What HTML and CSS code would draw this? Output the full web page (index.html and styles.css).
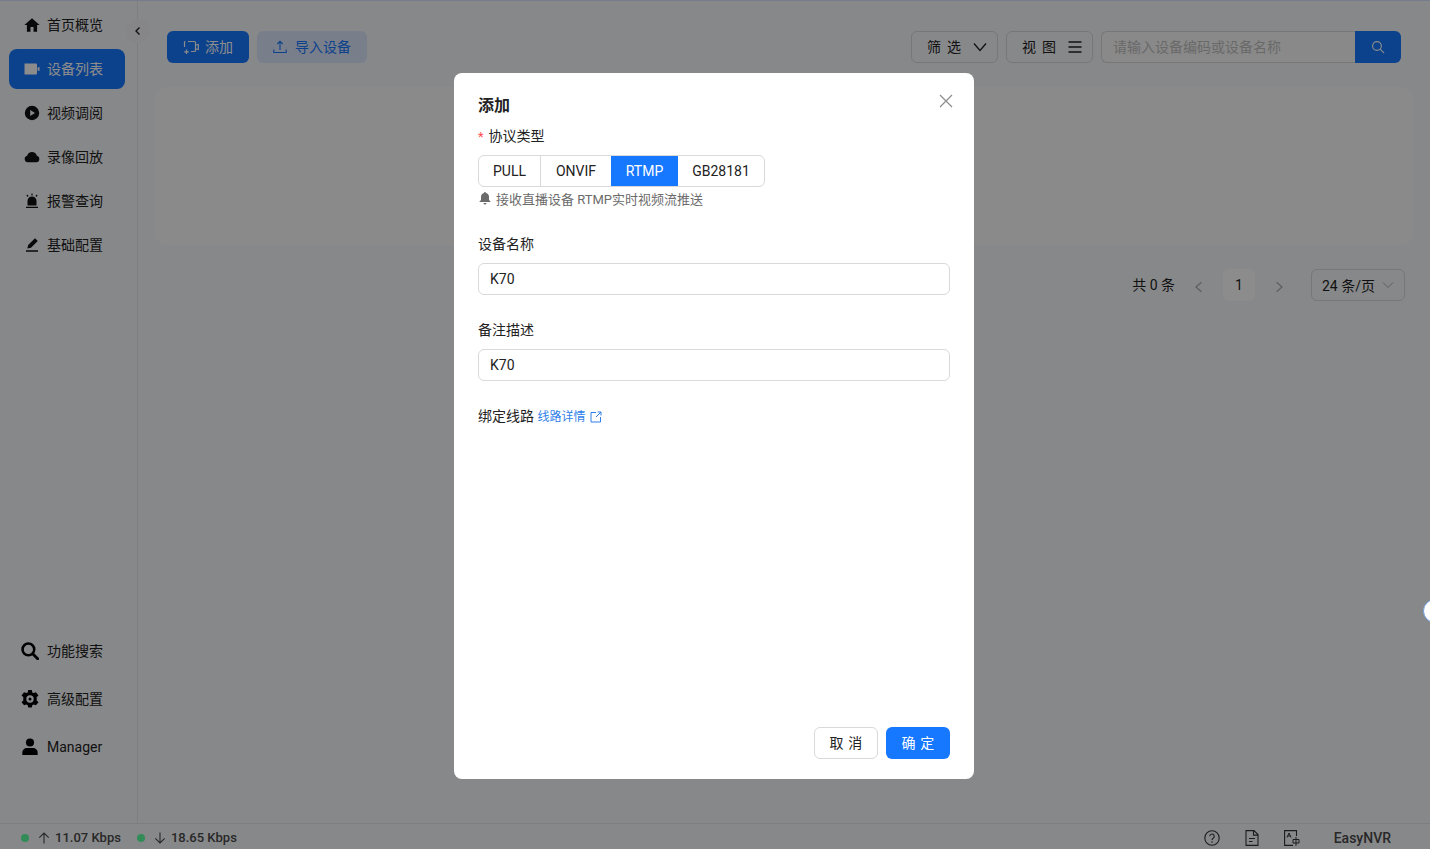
FILE: index.html
```html
<!DOCTYPE html>
<html lang="zh-CN">
<head>
<meta charset="utf-8">
<title>EasyNVR</title>
<link rel="stylesheet" href="styles.css">
</head>
<body>
<div class="app">
  <div class="body">
    <aside class="sidebar">
      <nav class="nav">
        <a class="nav-item"><svg class="nav-icon" viewBox="0 0 16 16"><path d="M8 1.200 .4 8h2.500v6.800h3.600V10h3v4.800h3.600V8h2.500z"/></svg><span>首页概览</span></a>
        <a class="nav-item active"><svg class="nav-icon" viewBox="0 0 16 16"><path d="M.5 2.500h11.500a1 1 0 0 1 1 1v9a1 1 0 0 1-1 1H.5z"/><path d="M13.600 6.500 15.500 6v4l-1.900-.5z"/></svg><span>设备列表</span></a>
        <a class="nav-item"><svg class="nav-icon" viewBox="0 0 16 16"><path fill-rule="evenodd" d="M8 .8a7.200 7.200 0 1 1 0 14.400A7.200 7.200 0 0 1 8 .8zM6.200 5v6L11 8z"/></svg><span>视频调阅</span></a>
        <a class="nav-item"><svg class="nav-icon" viewBox="0 0 16 16"><path d="M3.800 13.200a3.300 3.300 0 0 1-.6-6.500A5 5 0 0 1 12.800 6.700 3.300 3.300 0 0 1 12.300 13.200z"/></svg><span>录像回放</span></a>
        <a class="nav-item"><svg class="nav-icon" viewBox="0 0 16 16"><path d="M3.500 12.500V8a4.500 4.500 0 0 1 9 0v4.500zM2 13.700h12V15H2zM7.400 .6h1.200v2H7.400zM2.400 2.400l.9-.8 1.200 1.500-.9.800zM13.600 2.400l-.9-.8-1.200 1.500.9.800z"/></svg><span>报警查询</span></a>
        <a class="nav-item"><svg class="nav-icon" viewBox="0 0 16 16"><path d="M11 1.200l2.800 2.700-6.800 6.800-3.700.9.900-3.600zM2 13.300h12v1.400H2z"/></svg><span>基础配置</span></a>
      </nav>
      <nav class="nav-bottom">
        <a class="nav-item tall"><svg class="nav-icon big" viewBox="0 0 20 20"><circle cx="8.200" cy="8.200" r="6.500" fill="none" stroke="currentColor" stroke-width="2.800"/><path d="M13 13l5.500 5.500" stroke="currentColor" stroke-width="3.200" stroke-linecap="round"/></svg><span>功能搜索</span></a>
        <a class="nav-item tall"><svg class="nav-icon big" viewBox="1 1 18 18"><path fill-rule="evenodd" d="M8.200 1h3.600l.5 2.400 1.300.7 2.300-.8 2.600 3.100-1.800 1.600v3.600l1.800 1.600-2.600 3.100-2.300-.8-1.300.7-.5 2.400H8.200l-.5-2.400-1.300-.7-2.300.8-2.600-3.100 1.800-1.600V8L1.500 6.400l2.600-3.100 2.300.8 1.300-.7zM10 6.300a3.700 3.700 0 1 0 0 7.400 3.700 3.700 0 0 0 0-7.400zM10 8.500a1.500 1.500 0 1 1 0 3 1.500 1.500 0 0 1 0-3z"/></svg><span>高级配置</span></a>
        <a class="nav-item tall"><svg class="nav-icon big" viewBox="0 0 20 20"><circle cx="10" cy="5" r="4.500"/><path d="M1.500 19v-3c0-3 2.500-5 5-5h7c2.500 0 5 2 5 5v3z"/></svg><span>Manager</span></a>
      </nav>
      <button class="collapse" type="button"><svg viewBox="0 0 10 10" width="10" height="10"><path d="M6.500 1.500 3 5l3.500 3.500" fill="none" stroke="currentColor" stroke-width="1.400"/></svg></button>
    </aside>
    <main class="main">
      <div class="toolbar">
        <button class="btn primary" type="button"><svg class="btn-icon" viewBox="0 0 16 16"><path d="M5 2.500h6.500a1 1 0 0 1 1 1v8a1 1 0 0 1-1 1H8M1.500 8V3.500a1 1 0 0 1 1-1M13 6l2.300-.5v5L13 10M3.500 10.500v4.500M1.200 12.800h4.600" fill="none" stroke="currentColor" stroke-width="1.200"/></svg><span>添加</span></button>
        <button class="btn soft" type="button"><svg class="btn-icon" viewBox="0 0 16 16"><path d="M7 11V2.500M4.300 5 7 2.300 9.700 5M.8 10.500v3h12.400v-3" fill="none" stroke="currentColor" stroke-width="1.100"/></svg><span>导入设备</span></button>
        <div class="toolbar-right">
          <button class="btn outline" type="button"><span class="spaced-wide">筛选</span><svg class="btn-icon wide" viewBox="0 0 14 14"><path d="M1 3.500 7 10.500 13 3.500" fill="none" stroke="currentColor" stroke-width="1.300"/></svg></button>
          <button class="btn outline" type="button"><span class="spaced-wide">视图</span><svg class="btn-icon wide" viewBox="0 0 14 14"><path d="M.5 2h13M.5 7h13M.5 12h13" fill="none" stroke="currentColor" stroke-width="1.300"/></svg></button>
          <div class="search">
            <input class="search-input" type="text" placeholder="请输入设备编码或设备名称">
            <button class="search-btn" type="button"><svg viewBox="0 0 16 16" width="14" height="14"><circle cx="6.800" cy="6.800" r="5" fill="none" stroke="currentColor" stroke-width="1.300"/><path d="M10.500 10.500 15 15" stroke="currentColor" stroke-width="1.300"/></svg></button>
          </div>
        </div>
      </div>
      <section class="card"></section>
      <div class="pager">
        <span class="total">共 0 条</span>
        <svg class="pager-arrow" viewBox="0 0 10 10"><path d="M7 1 2.500 5 7 9" fill="none" stroke="currentColor" stroke-width="1"/></svg>
        <span class="page">1</span>
        <svg class="pager-arrow" viewBox="0 0 10 10"><path d="M3 1 7.500 5 3 9" fill="none" stroke="currentColor" stroke-width="1"/></svg>
        <div class="page-size"><span>24 条/页</span><svg viewBox="0 0 12 12" width="12" height="12"><path d="M1 3.500 6 8.500 11 3.500" fill="none" stroke="currentColor" stroke-width="1"/></svg></div>
      </div>
    </main>
  </div>
  <footer class="status">
    <span class="dot"></span>
    <svg class="arrow" viewBox="0 0 12 12"><path d="M6 11.500V1M1.300 5.700 6 1l4.700 4.700" fill="none" stroke="currentColor" stroke-width="1.100"/></svg>
    <span class="rate">11.07 Kbps</span>
    <span class="dot second"></span>
    <svg class="arrow" viewBox="0 0 12 12"><path d="M6 .5V11M1.300 6.300 6 11l4.700-4.700" fill="none" stroke="currentColor" stroke-width="1.100"/></svg>
    <span class="rate">18.65 Kbps</span>
    <div class="status-right">
      <svg class="status-icon" viewBox="0 0 16 16"><circle cx="8" cy="8" r="7.200" fill="none" stroke="currentColor" stroke-width="1.100"/><path d="M5.800 6.300a2.200 2.200 0 1 1 3.400 1.800C8.400 8.700 8 9 8 10" fill="none" stroke="currentColor" stroke-width="1.100"/><circle cx="8" cy="12" r=".8" fill="currentColor"/></svg>
      <svg class="status-icon" viewBox="0 0 16 16"><path d="M2 .6h8l4 4v10.800H2zM9.500 .6v4.500H14M5 8.500h6M5 11.500h3.500" fill="none" stroke="currentColor" stroke-width="1.100"/></svg>
      <svg class="status-icon" viewBox="0 0 16 16"><path d="M12.500 6V.6H.6v14.800H9" fill="none" stroke="currentColor" stroke-width="1.100"/><path d="M3 7.500 5 3l2 4.500M3.800 6h2.400M12 7v8.800M9 9.500h6v3.500H9z" fill="none" stroke="currentColor" stroke-width="1"/></svg>
      <span class="brand">EasyNVR</span>
    </div>
  </footer>
</div>

<div class="overlay">
  <div class="dialog">
    <button class="close" type="button"><svg viewBox="0 0 14 14" width="14" height="14"><path d="M1 1l12 12M13 1 1 13" fill="none" stroke="currentColor" stroke-width="1.200"/></svg></button>
    <h2 class="title">添加</h2>
    <div class="field first">
      <label class="label"><span class="req">*</span>协议类型</label>
      <div class="radios">
        <span class="radio">PULL</span>
        <span class="radio">ONVIF</span>
        <span class="radio on">RTMP</span>
        <span class="radio">GB28181</span>
      </div>
      <p class="help"><svg viewBox="0 0 14 14" width="14" height="14"><path d="M7 1a1 1 0 0 1 1 .9c2 .5 3 2 3 4v3l1.500 1.600v.5h-11v-.5L3 8.900v-3c0-2 1-3.500 3-4A1 1 0 0 1 7 1zM5.500 12h3a1.500 1.500 0 0 1-3 0z"/></svg><span>接收直播设备 RTMP实时视频流推送</span></p>
    </div>
    <div class="field">
      <label class="label">设备名称</label>
      <input class="input" type="text" value="K70">
    </div>
    <div class="field">
      <label class="label">备注描述</label>
      <input class="input" type="text" value="K70">
    </div>
    <div class="field">
      <label class="label">绑定线路 <a class="link">线路详情<svg viewBox="0 0 12 12" width="12" height="12"><path d="M6 1.500H1v9.500h9.500V6M7.500 1H11v3.500M11 1 6 6" fill="none" stroke="currentColor" stroke-width="1"/></svg></a></label>
    </div>
    <div class="dialog-footer">
      <button class="btn outline-light" type="button"><span class="spaced">取消</span></button>
      <button class="btn primary" type="button"><span class="spaced">确定</span></button>
    </div>
  </div>
</div>
<div class="float-handle"></div>
</body>
</html>
```
FILE: styles.css
```css
* { box-sizing: border-box; }
html, body { height: 100%; margin: 0; }
body {
  font-family: Roboto, "Noto Sans CJK SC", sans-serif;
  font-size: 14px;
  color: #1f1f1f;
  background: #f6f8fb;
  overflow: hidden;
}
button { font: inherit; cursor: pointer; }
h2, p { margin: 0; }

.app { display: flex; flex-direction: column; height: 849px; border-top: 1px solid #d6e2ff; }
.body { display: flex; flex: 1; min-height: 0; }

.sidebar {
  position: relative;
  width: 138px;
  flex: none;
  display: flex;
  flex-direction: column;
  justify-content: space-between;
  border-right: 1px solid #e6e6e6;
  padding: 4px 12px 56px 9px;
}
.nav { display: flex; flex-direction: column; gap: 4px; }
.nav-bottom { display: flex; flex-direction: column; gap: 8px; }
.nav-item {
  display: flex;
  align-items: center;
  height: 40px;
  width: 116px;
  padding-left: 15px;
  border-radius: 8px;
  color: #222;
  line-height: 20px;
}
.nav-item.active { background: #1677ff; color: #fff; }
.nav-item.tall { padding-left: 12px; }
.nav-icon { width: 16px; height: 16px; margin-right: 7px; fill: currentColor; color: #111; flex: none; }
.active .nav-icon { color: #fff; }
.nav-icon.big { width: 18px; height: 18px; margin-right: 8px; color: #000; }
.collapse {
  position: absolute;
  right: -13px;
  top: 18px;
  width: 24px;
  height: 24px;
  border: 0;
  border-radius: 50%;
  background: #f4f5f7;
  color: #222;
  display: flex;
  align-items: center;
  justify-content: center;
  padding: 0;
}

.main { flex: 1; min-width: 0; padding: 30px 17px 0 17px; display: flex; flex-direction: column; }
.toolbar { display: flex; align-items: center; gap: 8px; padding: 0 12px 0 12px; }
.toolbar-right { margin-left: auto; display: flex; gap: 8px; }
.btn {
  height: 32px;
  border-radius: 6px;
  border: 1px solid transparent;
  padding: 0 15px;
  display: inline-flex;
  align-items: center;
  justify-content: center;
  line-height: 20px;
  white-space: nowrap;
}
.btn.primary { background: #1677ff; color: #fff; }
.btn.soft { background: #dbe8fb; color: #1677ff; }
.btn.outline { background: transparent; border-color: #d9d9d9; color: #222; padding: 0 10px 0 15px; }
.btn.outline-light { background: #fff; border-color: #d9d9d9; color: #222; }
.btn-icon { width: 16px; height: 16px; margin-right: 6px; flex: none; }
.btn-icon.wide { width: 14px; height: 14px; margin: 0 0 0 12px; }
.spaced { letter-spacing: .34em; margin-right: -.34em; }
.spaced-wide { letter-spacing: 6px; margin-right: -6px; }

.search { display: flex; width: 300px; height: 32px; }
.search-input {
  flex: 1;
  min-width: 0;
  border: 1px solid #d9d9d9;
  border-right: 0;
  border-radius: 6px 0 0 6px;
  background: #fafafa;
  padding: 0 11px;
  font: inherit;
  outline: 0;
}
.search-input::placeholder { color: #bfbfbf; }
.search-btn {
  width: 46px;
  border: 0;
  border-radius: 0 6px 6px 0;
  background: #1677ff;
  color: #fff;
  display: flex;
  align-items: center;
  justify-content: center;
  padding: 0;
}

.card { height: 158px; margin-top: 24px; border-radius: 12px; background: #fbfcfe; }

.pager { display: flex; align-items: center; height: 32px; margin-top: 24px; padding-right: 8px; justify-content: flex-end; }
.total { margin-right: 18px; padding-bottom: 2px; }
.pager-arrow { width: 12px; height: 12px; color: #aaa; margin-top: 4px; }
.page {
  width: 32px;
  height: 32px;
  margin: 0 18px;
  border-radius: 6px;
  background: #fff;
  display: flex;
  align-items: center;
  justify-content: center;
}
.page-size {
  width: 94px;
  height: 32px;
  margin-left: 26px;
  border: 1px solid #d9d9d9;
  border-radius: 6px;
  padding: 0 10px;
  display: flex;
  align-items: center;
  justify-content: space-between;
}
.page-size svg { color: #aaa; }

.status {
  height: 26px;
  flex: none;
  border-top: 1px solid #e6e6e6;
  display: flex;
  align-items: center;
  padding: 2px 39px 0 21px;
  color: #4a4a4a;
}
.dot { width: 8px; height: 8px; border-radius: 50%; background: #5cffa0; margin-right: 9px; flex: none; }
.dot.second { margin-left: 16px; margin-right: 9px; }
.arrow { width: 12px; height: 12px; margin-right: 5px; flex: none; }
.rate { font-size: 13px; font-weight: 500; }
.status-right { margin-left: auto; display: flex; align-items: center; }
.status-icon { width: 16px; height: 16px; margin-right: 24px; color: #333; }
.brand { margin-left: 10px; font-weight: 500; }

.overlay {
  position: fixed;
  inset: 0;
  background: rgba(0, 0, 0, .45);
  display: flex;
  justify-content: center;
  padding-top: 73px;
}
.dialog {
  position: relative;
  width: 520px;
  height: 706px;
  margin-left: -2px;
  background: #fff;
  border-radius: 8px;
  padding: 21px 24px 20px;
  display: flex;
  flex-direction: column;
}
.close {
  position: absolute;
  top: 21px;
  right: 21px;
  border: 0;
  background: none;
  padding: 0;
  color: #8c8c8c;
  display: flex;
}
.title { font-size: 16px; font-weight: 600; line-height: 24px; color: #222; }
.field { margin-top: 24px; display: flex; flex-direction: column; }
.field.first { margin-top: 6px; padding-top: 1px; }
.label { line-height: 22px; height: 22px; font-size: 14px; color: #222; }
.req { color: #ff4d4f; margin-right: 5px; font-size: 13px; }
.radios {
  display: grid;
  grid-template-columns: 62px 70px 67px 86px;
  margin-top: 8px;
  width: 287px;
  height: 32px;
  border: 1px solid #d9d9d9;
  border-radius: 6px;
  overflow: hidden;
}
.radio { text-align: center; line-height: 30px; color: #222; }
.radio:first-child { border-right: 1px solid #d9d9d9; }
.radio.on { background: #1677ff; color: #fff; margin: -1px 0; line-height: 32px; }
.help { display: flex; align-items: center; gap: 4px; height: 22px; font-size: 13px; color: #6b6b6b; }
.help svg { fill: #6b6b6b; flex: none; }
.input {
  margin-top: 8px;
  height: 32px;
  border: 1px solid #d9d9d9;
  border-radius: 6px;
  padding: 0 11px;
  font: inherit;
  color: #222;
  outline: 0;
}
.link { color: #2f7fe8; font-size: 12px; }
.link svg { margin-left: 4px; vertical-align: -2px; }
.dialog-footer { margin-top: auto; display: flex; justify-content: flex-end; gap: 8px; }
.dialog-footer .btn { width: 64px; padding: 0; }

.float-handle {
  position: fixed;
  left: 1423px;
  top: 599px;
  width: 24px;
  height: 24px;
  border-radius: 50%;
  background: #fff;
  border: 1px solid #6f9fe0;
}
```
